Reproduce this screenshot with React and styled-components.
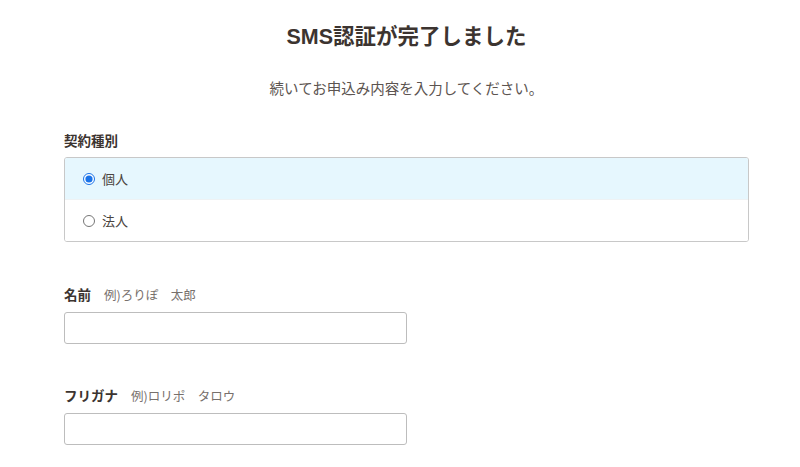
import styled, { createGlobalStyle } from "styled-components";

const Global = createGlobalStyle`
  body {
    margin: 0;
    background: #fff;
    font-family: "Noto Sans CJK JP", "Noto Sans", sans-serif;
    color: #3c3430;
  }
`;

const Page = styled.div`
  padding: 22px 51px 0 64px;
`;

const Title = styled.h1`
  margin: 0;
  text-align: center;
  font-size: 21.5px;
  font-weight: 700;
  line-height: 31px;
  color: #3c3430;
  font-family: "Liberation Sans", "Noto Sans CJK JP", sans-serif;
`;

const Lead = styled.p`
  margin: 25px 0 0;
  text-align: center;
  font-size: 14.5px;
  line-height: 20px;
  color: #5c5450;
`;

const Field = styled.div`
  margin-top: ${(p) => p.gap}px;
`;

const Label = styled.div`
  display: flex;
  align-items: baseline;
  gap: 13px;
  font-size: 13.5px;
  font-weight: 700;
  line-height: 20px;
  margin-bottom: 7px;
`;

const Example = styled.span`
  font-size: 12.5px;
  font-weight: 400;
  color: #77706c;
`;

const RadioBox = styled.div`
  border: 1px solid #c8c8c8;
  border-radius: 3px;
  overflow: hidden;
`;

const Option = styled.label`
  display: flex;
  align-items: center;
  gap: 7px;
  height: 41px;
  padding-left: 18px;
  font-size: 13px;
  color: #4a4440;
  background: ${(p) => (p.checked ? "#e6f7fe" : "#fff")};
  & + & {
    border-top: 1px solid #eef2f4;
  }
  input {
    margin: 0;
    width: 12px;
    height: 12px;
    accent-color: #1a73e8;
  }
`;

const Input = styled.input`
  display: block;
  box-sizing: border-box;
  width: 343px;
  height: 32px;
  border: 1px solid #bdbdbd;
  border-radius: 3px;
  font-size: 14px;
  padding: 0 8px;
  outline: none;
`;

export default function App() {
  return (
    <Page>
      <Global />
      <Title>SMS認証が完了しました</Title>
      <Lead>続いてお申込み内容を入力してください。</Lead>
      <Field gap={32}>
        <Label>契約種別</Label>
        <RadioBox>
          <Option checked>
            <input type="radio" name="kind" defaultChecked />
            個人
          </Option>
          <Option>
            <input type="radio" name="kind" />
            法人
          </Option>
        </RadioBox>
      </Field>
      <Field gap={42}>
        <Label>
          名前<Example>例)ろりぽ　太郎</Example>
        </Label>
        <Input />
      </Field>
      <Field gap={41}>
        <Label>
          フリガナ<Example>例)ロリポ　タロウ</Example>
        </Label>
        <Input />
      </Field>
    </Page>
  );
}
